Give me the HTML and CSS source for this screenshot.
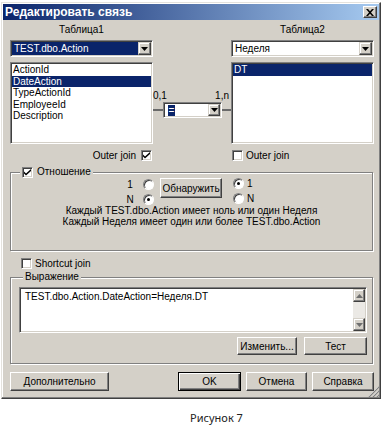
FILE: index.html
```html
<!DOCTYPE html>
<html lang="ru">
<head>
    <meta charset="UTF-8">
    <title>Редактировать связь</title>
    <link rel="stylesheet" href="styles.css">
</head>
<body>
    <div class="dialog">
        <div class="titlebar">
            <span class="title">Редактировать связь</span>
            <span class="close-btn">
                <svg width="8" height="7" viewBox="0 0 8 7"><path d="M0 0h2l2 2.3L6 0h2L5 3.5 8 7H6L4 4.7 2 7H0l3-3.5z" fill="#000"/></svg>
            </span>
        </div>

        <div class="content">
            <div class="tables">
                <div class="caption">Таблица1</div>
                <div></div>
                <div class="caption">Таблица2</div>

                <div class="combo table-combo">
                    <span class="combo-text selected">TEST.dbo.Action</span>
                    <span class="drop-btn"><svg width="7" height="4" viewBox="0 0 7 4"><path d="M0 0h7L3.5 4z" fill="#000"/></svg></span>
                </div>
                <div></div>
                <div class="combo table-combo">
                    <span class="combo-text">Неделя</span>
                    <span class="drop-btn"><svg width="7" height="4" viewBox="0 0 7 4"><path d="M0 0h7L3.5 4z" fill="#000"/></svg></span>
                </div>

                <ul class="listbox">
                    <li>ActionId</li>
                    <li class="selected">DateAction</li>
                    <li>TypeActionId</li>
                    <li>EmployeeId</li>
                    <li>Description</li>
                </ul>
                <div class="link">
                    <div class="cardinality"><span>0,1</span><span>1,n</span></div>
                    <div class="link-row">
                        <span class="link-line link-left"></span>
                        <div class="combo op-combo">
                            <span class="combo-text"><span class="op">=</span></span>
                            <span class="drop-btn"><svg width="7" height="4" viewBox="0 0 7 4"><path d="M0 0h7L3.5 4z" fill="#000"/></svg></span>
                        </div>
                        <span class="link-line"></span>
                    </div>
                </div>
                <ul class="listbox">
                    <li class="selected">DT</li>
                </ul>

                <label class="check-row outer-left">
                    Outer join
                    <span class="checkbox"><svg width="7" height="7" viewBox="0 0 7 7"><path d="M0 2.5l2 2 5-4.5v2L2 6.5 0 4.5z" fill="#000"/></svg></span>
                </label>
                <div></div>
                <label class="check-row outer-right">
                    <span class="checkbox"></span>
                    Outer join
                </label>
            </div>

            <fieldset class="group relation">
                <legend class="legend-check">
                    <span class="checkbox"><svg width="7" height="7" viewBox="0 0 7 7"><path d="M0 2.5l2 2 5-4.5v2L2 6.5 0 4.5z" fill="#000"/></svg></span>
                    Отношение
                </legend>
                <div class="relation-row">
                    <div class="radio-col radio-left">
                        <div class="radio-item"><span class="radio-label">1</span><span class="radio"></span></div>
                        <div class="radio-item"><span class="radio-label">N</span><span class="radio checked"></span></div>
                    </div>
                    <button class="btn detect-btn">Обнаружить</button>
                    <div class="radio-col radio-right">
                        <div class="radio-item"><span class="radio checked"></span><span class="radio-label">1</span></div>
                        <div class="radio-item"><span class="radio"></span><span class="radio-label">N</span></div>
                    </div>
                </div>
                <p class="relation-text">Каждый TEST.dbo.Action имеет ноль или один Неделя<br>Каждый Неделя имеет один или более TEST.dbo.Action</p>
            </fieldset>

            <label class="check-row shortcut">
                <span class="checkbox"></span>
                Shortcut join
            </label>

            <fieldset class="group expression">
                <legend class="legend-text">Выражение</legend>
                <div class="textbox">
                    <div class="textbox-text">TEST.dbo.Action.DateAction=Неделя.DT</div>
                    <div class="scrollbar">
                        <span class="scroll-btn"><svg width="7" height="4" viewBox="0 0 7 4"><path d="M0 4h7L3.5 0z" fill="#6e6e6e"/></svg></span>
                        <span class="scroll-track"></span>
                        <span class="scroll-btn"><svg width="7" height="4" viewBox="0 0 7 4"><path d="M0 0h7L3.5 4z" fill="#6e6e6e"/></svg></span>
                    </div>
                </div>
                <div class="expr-buttons">
                    <button class="btn edit-btn">Изменить...</button>
                    <button class="btn test-btn">Тест</button>
                </div>
            </fieldset>

            <div class="footer">
                <button class="btn more-btn">Дополнительно</button>
                <button class="btn btn-default ok-btn">OK</button>
                <button class="btn cancel-btn">Отмена</button>
                <button class="btn help-btn">Справка</button>
            </div>
        </div>

        <svg class="size-grip" width="11" height="11" viewBox="0 0 11 11">
            <path d="M10 1L1 10M10 5L5 10M10 9L9 10" stroke="#fff" stroke-width="1"/>
            <path d="M11 1L1 11M11 5L5 11M11 9L9 11" stroke="#808080" stroke-width="1.2"/>
        </svg>
    </div>

    <div class="figure-caption">Рисунок 7</div>
</body>
</html>
```

FILE: styles.css
```css
* {
    box-sizing: border-box;
}

body {
    margin: 0;
    width: 388px;
    height: 436px;
    overflow: hidden;
    background: #ffffff;
    font-family: "Liberation Sans", Arial, sans-serif;
    font-size: 10px;
    color: #000000;
}

/* Window frame */
.dialog {
    position: relative;
    margin: 2px 0 0 1px;
    width: 380px;
    padding: 1px;
    background: #d4d0c8;
    border: 1px solid;
    border-color: #e4e2dd #404040 #404040 #e4e2dd;
    box-shadow: inset -1px -1px #808080, inset 1px 1px #ffffff;
}

.titlebar {
    height: 16px;
    display: flex;
    align-items: center;
    justify-content: space-between;
    padding: 0 2px 0 2px;
    background: linear-gradient(to right, #0a246a, #a6caf0);
    color: #ffffff;
    font-size: 12px;
    font-weight: bold;
}

.close-btn {
    width: 14px;
    height: 12px;
    display: flex;
    align-items: center;
    justify-content: center;
    background: #d4d0c8;
    border: 1px solid;
    border-color: #ffffff #404040 #404040 #ffffff;
    box-shadow: inset -1px -1px #808080;
}

.content {
    padding: 4px 5px 6px 7px;
}

/* Table pickers */
.tables {
    display: grid;
    grid-template-columns: 143px 78px 143px;
}

.caption {
    line-height: 12px;
    text-align: center;
}

.combo {
    display: flex;
    padding: 1px;
    background: #ffffff;
    border: 1px solid;
    border-color: #808080 #ffffff #ffffff #808080;
    box-shadow: inset 1px 1px #404040, inset -1px -1px #d4d0c8;
}

.table-combo {
    height: 17px;
    margin-top: 4px;
}

.combo-text {
    flex: 1;
    line-height: 13px;
    padding-left: 2px;
    white-space: nowrap;
    overflow: hidden;
}

.selected {
    background: #0a246a;
    color: #ffffff;
}

.drop-btn {
    width: 13px;
    display: flex;
    align-items: center;
    justify-content: center;
    background: #d4d0c8;
    border: 1px solid;
    border-color: #d4d0c8 #404040 #404040 #d4d0c8;
    box-shadow: inset -1px -1px #808080, inset 1px 1px #ffffff;
}

.listbox {
    list-style: none;
    margin: 5px 0 0;
    padding: 1px;
    height: 82px;
    background: #ffffff;
    border: 1px solid;
    border-color: #808080 #ffffff #ffffff #808080;
    box-shadow: inset 1px 1px #404040, inset -1px -1px #d4d0c8;
}

.listbox li {
    line-height: 11.5px;
    padding-left: 1px;
}

.link {
    padding-top: 33px;
}

.cardinality {
    display: flex;
    justify-content: space-between;
    padding-right: 2px;
    line-height: 11px;
}

.link-row {
    display: flex;
    align-items: center;
    margin-top: 1px;
}

.link-line {
    flex: 1;
    height: 2px;
    background: #6a6a6a;
}

.link-left {
    flex: 0 0 10px;
}

.op-combo {
    width: 59px;
    height: 16px;
}

.op-combo .combo-text {
    padding-left: 3px;
}

.op {
    display: inline-block;
    width: 7px;
    line-height: 11px;
    text-align: center;
    background: #0a246a;
    color: #ffffff;
}

.op-combo .drop-btn {
    width: 12px;
}

/* Checkboxes and radios */
.check-row {
    display: flex;
    align-items: center;
    height: 11px;
    line-height: 11px;
}

.outer-left {
    margin-top: 6px;
    justify-content: flex-end;
    gap: 5px;
    padding-right: 1px;
}

.outer-right {
    margin-top: 6px;
    gap: 3px;
    padding-left: 1px;
}

.checkbox {
    width: 11px;
    height: 11px;
    display: inline-flex;
    align-items: center;
    justify-content: center;
    flex: none;
    background: #ffffff;
    border: 1px solid;
    border-color: #808080 #ffffff #ffffff #808080;
    box-shadow: inset 1px 1px #404040, inset -1px -1px #d4d0c8;
}

.radio {
    position: relative;
    width: 11px;
    height: 11px;
    flex: none;
    border-radius: 50%;
    background: #ffffff;
    border: 1px solid;
    border-color: #808080 #ffffff #ffffff #808080;
    box-shadow: inset 1px 1px #404040;
}

.radio.checked::after {
    content: "";
    position: absolute;
    left: 3px;
    top: 3px;
    width: 3px;
    height: 3px;
    border-radius: 50%;
    background: #000000;
}

/* Group boxes */
.group {
    margin: 0 1px 0 0;
    padding: 0;
    min-inline-size: 0;
    border: 1px solid #808080;
    box-shadow: inset 1px 1px #ffffff, 1px 1px #ffffff;
}

.group legend {
    background: #d4d0c8;
    line-height: 12px;
    height: 12px;
}

.relation {
    margin-top: 5px;
    padding-bottom: 23px;
}

.legend-check {
    display: flex;
    align-items: center;
    gap: 4px;
    margin-left: 9px;
    padding: 0 2px;
}

.relation-row {
    display: flex;
    height: 27px;
    padding-left: 115px;
}

.radio-col {
    display: flex;
    flex-direction: column;
    gap: 4px;
}

.radio-item {
    display: flex;
    align-items: center;
    height: 11px;
    line-height: 11px;
}

.radio-left {
    margin-top: 1px;
}

.radio-left .radio-label {
    width: 8px;
    margin-right: 9px;
    text-align: center;
}

.radio-right {
    margin-left: 11px;
}

.radio-right .radio-label {
    margin-left: 3px;
}

.relation-text {
    margin: 0;
    line-height: 11px;
    text-align: center;
}

.shortcut {
    margin-top: 7px;
    padding-left: 11px;
    gap: 3px;
}

.expression {
    margin-top: 2px;
    padding: 4px 5px 8px 8px;
}

.legend-text {
    margin-left: 4px;
    padding: 0 2px;
}

.textbox {
    display: flex;
    height: 46px;
    padding: 1px;
    background: #ffffff;
    border: 1px solid;
    border-color: #808080 #ffffff #ffffff #808080;
    box-shadow: inset 1px 1px #404040, inset -1px -1px #d4d0c8;
}

.textbox-text {
    flex: 1;
    padding: 2px 4px;
    line-height: 11px;
}

.scrollbar {
    width: 12px;
    display: flex;
    flex-direction: column;
}

.scroll-btn {
    height: 13px;
    display: flex;
    align-items: center;
    justify-content: center;
    background: #d4d0c8;
    border: 1px solid;
    border-color: #d4d0c8 #404040 #404040 #d4d0c8;
    box-shadow: inset -1px -1px #808080, inset 1px 1px #ffffff;
}

.scroll-track {
    flex: 1;
    background: #ebe9e5;
}

.expr-buttons {
    display: flex;
    justify-content: flex-end;
    gap: 7px;
    margin-top: 4px;
}

/* Buttons */
.btn {
    height: 19px;
    padding: 0;
    font: inherit;
    color: #000000;
    background: #d4d0c8;
    border: 1px solid;
    border-color: #ffffff #404040 #404040 #ffffff;
    box-shadow: inset -1px -1px #808080;
}

.btn-default {
    border-color: #000000;
    box-shadow: inset 1px 1px #ffffff, inset -1px -1px #404040, inset -2px -2px #808080;
}

.detect-btn {
    width: 62px;
    height: 20px;
    margin-left: 6px;
}

.edit-btn {
    width: 60px;
    height: 18px;
}

.test-btn {
    width: 63px;
    height: 18px;
}

.footer {
    display: flex;
    gap: 5px;
    margin-top: 8px;
}

.more-btn {
    width: 99px;
    margin-right: auto;
}

.ok-btn {
    width: 63px;
}

.cancel-btn {
    width: 61px;
}

.help-btn {
    width: 62px;
}

.size-grip {
    position: absolute;
    right: 1px;
    bottom: 1px;
}

.figure-caption {
    margin-top: 12px;
    padding-left: 45px;
    text-align: center;
    font-family: "Noto Sans", sans-serif;
    font-size: 11px;
    line-height: 13px;
    color: #222222;
}
```
